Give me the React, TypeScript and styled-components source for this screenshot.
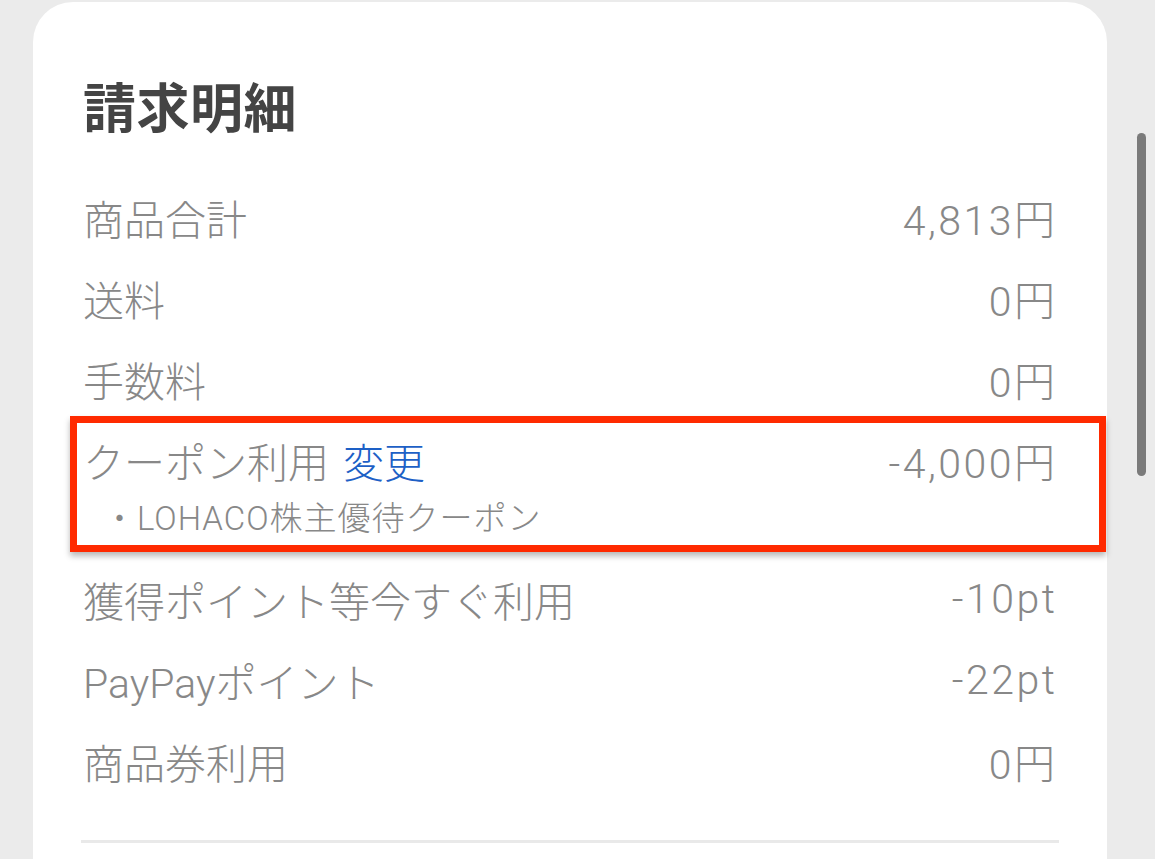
import React from 'react'
import styled, { createGlobalStyle } from 'styled-components'

const GlobalStyle = createGlobalStyle`
  html, body {
    margin: 0;
    padding: 0;
    background: #ebebeb;
    overflow: hidden;
  }
  body {
    font-family: "Roboto", "Noto Sans CJK JP", "Noto Sans", sans-serif;
  }
`;

const Page = styled.div`
  display: flex;
  height: 859px;
  padding: 2px 0 0 33px;
  box-sizing: border-box;
  overflow: hidden;
`;

const Card = styled.div`
  width: 1074px;
  min-height: 1000px;
  background: #ffffff;
  border-radius: 40px 40px 0 0;
  padding: 73px 52px 0 50px;
  box-sizing: border-box;
`;

const Title = styled.h2`
  margin: 0 0 41px;
  font-family: "Noto Sans CJK JP", sans-serif;
  font-size: 53px;
  line-height: 60px;
  font-weight: 700;
  color: #444444;
  letter-spacing: 0.5px;
`;

const Row = styled.div`
  display: flex;
  justify-content: space-between;
  align-items: center;
  height: 81px;
  font-size: 41px;
  font-weight: 300;
  color: #888888;
`;

const Label = styled.span``;

const Amount = styled.span`
  letter-spacing: 2.5px;
  margin-right: -2.5px;
`;

const Link = styled.a`
  color: #1d60c6;
  text-decoration: none;
  margin-left: 14px;
  cursor: pointer;
`;

const CouponBlock = styled.div`
  position: relative;
  padding-bottom: 19px;
`;

const SubLine = styled.div`
  font-size: 33px;
  font-weight: 300;
  line-height: 40px;
  letter-spacing: 1px;
  color: #888888;
  padding-left: 20px;
  margin-top: -1px;
`;

const Highlight = styled.div`
  position: absolute;
  top: -3px;
  left: -13px;
  right: -51px;
  bottom: 6px;
  border: 7px solid #ff2a00;
  box-shadow: 0 4px 6px rgba(0, 0, 0, 0.28);
  pointer-events: none;
`;

const Divider = styled.div`
  height: 3px;
  background: #e9e9e9;
  margin: 39px -4px 0 -2px;
`;

const ScrollTrack = styled.div`
  flex: 1;
  padding: 131px 0 0 30px;
`;

const ScrollThumb = styled.div`
  width: 9px;
  height: 343px;
  border-radius: 5px;
  background: #7a7a7a;
`;

const rows = [
  { label: '商品合計', value: '4,813円' },
  { label: '送料', value: '0円' },
  { label: '手数料', value: '0円' },
];

const rowsAfter = [
  { label: '獲得ポイント等今すぐ利用', value: '-10pt' },
  { label: 'PayPayポイント', value: '-22pt' },
  { label: '商品券利用', value: '0円' },
];

export default function App() {
  return (
    <>
      <GlobalStyle />
      <Page>
        <Card>
          <Title>請求明細</Title>
          {rows.map((r) => (
            <Row key={r.label}>
              <Label>{r.label}</Label>
              <Amount>{r.value}</Amount>
            </Row>
          ))}
          <CouponBlock>
            <Row>
              <Label>
                クーポン利用<Link>変更</Link>
              </Label>
              <Amount>-4,000円</Amount>
            </Row>
            <SubLine>・LOHACO株主優待クーポン</SubLine>
            <Highlight />
          </CouponBlock>
          {rowsAfter.map((r) => (
            <Row key={r.label}>
              <Label>{r.label}</Label>
              <Amount>{r.value}</Amount>
            </Row>
          ))}
          <Divider />
        </Card>
        <ScrollTrack>
          <ScrollThumb />
        </ScrollTrack>
      </Page>
    </>
  )
}
